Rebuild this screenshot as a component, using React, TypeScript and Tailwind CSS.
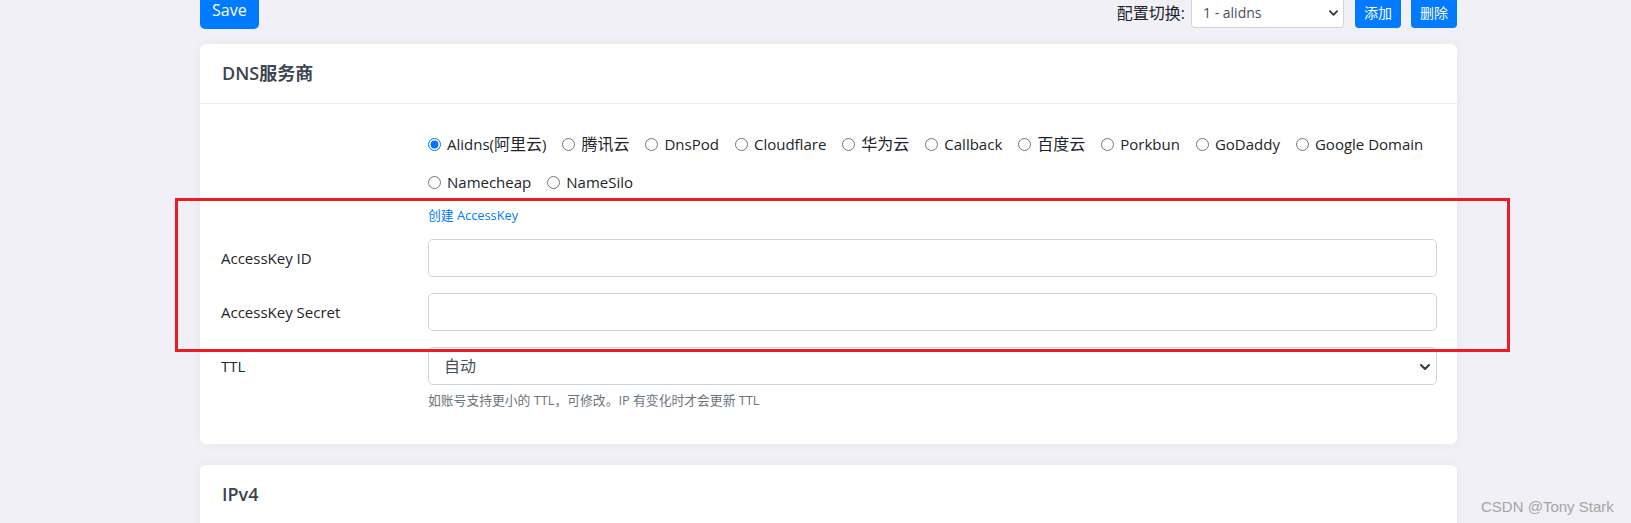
import { useState } from 'react'

const PROVIDERS: { id: string; label: React.ReactNode }[] = [
  { id: 'alidns', label: <>Alidns(<Zh>阿里云</Zh>)</> },
  { id: 'tencentcloud', label: <Zh>腾讯云</Zh> },
  { id: 'dnspod', label: 'DnsPod' },
  { id: 'cloudflare', label: 'Cloudflare' },
  { id: 'huaweicloud', label: <Zh>华为云</Zh> },
  { id: 'callback', label: 'Callback' },
  { id: 'baiducloud', label: <Zh>百度云</Zh> },
  { id: 'porkbun', label: 'Porkbun' },
  { id: 'godaddy', label: 'GoDaddy' },
  { id: 'googledomain', label: 'Google Domain' },
  { id: 'namecheap', label: 'Namecheap' },
  { id: 'namesilo', label: 'NameSilo' },
]

// Chinese glyphs sit a touch larger than the latin text around them
function Zh({ children }: { children: React.ReactNode }) {
  return <span className="text-[16px]">{children}</span>
}

function Chevron({ className }: { className?: string }) {
  return (
    <svg viewBox="0 0 10 6" className={className} fill="none">
      <path d="M1 1l4 4 4-4" stroke="#343a40" strokeWidth="2" strokeLinecap="round" strokeLinejoin="round" />
    </svg>
  )
}

function Card({ title, children }: { title: string; children?: React.ReactNode }) {
  return (
    <div className="bg-white rounded-[6px] shadow-[0_0_12px_rgba(40,40,80,0.05)]">
      <div className="h-[60px] px-[22px] flex items-center border-b border-[#e9ecef]">
        <h2 className="text-[18px] font-semibold text-[#3d4452]">{title}</h2>
      </div>
      {children}
    </div>
  )
}

export default function App() {
  const [dns, setDns] = useState('alidns')

  return (
    <div
      className="relative h-[523px] overflow-hidden bg-[#f0f0f6] text-[#212529] text-[15px]"
      style={{ fontFamily: '"Open Sans", "Noto Sans CJK SC", sans-serif' }}
    >
      <div className="ml-[200px] w-[1257px] -mt-[9px]">
        {/* Top bar */}
        <div className="flex items-end justify-between">
          <button className="h-[38px] px-[12px] bg-[#007bff] text-white text-[16px] rounded-[5px]">
            Save
          </button>
          <div className="flex items-center mb-[1px]">
            <span className="text-[16px] mr-[6px]">配置切换:</span>
            <div className="relative w-[153px] h-[31px] bg-white border border-[#ced4da] rounded-[4px] flex items-center pl-[11px] text-[14px] text-[#495057]">
              1 - alidns
              <Chevron className="absolute right-[5px] top-[12px] w-[9px] h-[6px]" />
            </div>
            <button className="ml-[11px] h-[31px] w-[46px] bg-[#007bff] text-white text-[14px] rounded-[4px]">
              添加
            </button>
            <button className="ml-[10px] h-[31px] w-[46px] bg-[#007bff] text-white text-[14px] rounded-[4px]">
              删除
            </button>
          </div>
        </div>

        {/* DNS provider */}
        <div className="mt-[15px]">
          <Card title="DNS服务商">
            <div className="px-5 pt-[21px] pb-[34px]">
              <div className="grid grid-cols-[208px_1fr]">
                <div />
                <div>
                  <div className="flex flex-wrap gap-x-[16px]">
                    {PROVIDERS.map(p => (
                      <label key={p.id} className="h-[38px] flex items-center">
                        <input
                          type="radio"
                          name="dns"
                          checked={dns === p.id}
                          onChange={() => setDns(p.id)}
                          className="m-0 w-[13px] h-[13px] mr-[6px]"
                        />
                        <span>{p.label}</span>
                      </label>
                    ))}
                  </div>
                  <a className="block mt-[5px] mb-[15px] text-[12.8px] leading-[18px] text-[#007bff]">
                    创建 AccessKey
                  </a>
                </div>
              </div>

              <div className="grid grid-cols-[208px_1fr] items-center mb-4">
                <label className="pl-[1px]">AccessKey ID</label>
                <input className="h-[38px] border border-[#ced4da] rounded-[5px] px-3 outline-none" />
              </div>
              <div className="grid grid-cols-[208px_1fr] items-center mb-4">
                <label className="pl-[1px]">AccessKey Secret</label>
                <input className="h-[38px] border border-[#ced4da] rounded-[5px] px-3 outline-none" />
              </div>
              <div className="grid grid-cols-[208px_1fr] items-start">
                <label className="pl-[1px] h-[38px] flex items-center">TTL</label>
                <div>
                  <div className="relative h-[38px] border border-[#ced4da] rounded-[5px] flex items-center pl-[15px] text-[16px] text-[#495057]">
                    自动
                    <Chevron className="absolute right-[6px] top-[16px] w-[10px] h-[6px]" />
                  </div>
                  <p className="mt-[6px] text-[12.8px] leading-[19px] text-[#6c757d]">
                    如账号支持更小的 TTL，可修改。IP 有变化时才会更新 TTL
                  </p>
                </div>
              </div>
            </div>
          </Card>
        </div>

        {/* IPv4 */}
        <div className="mt-[21px]">
          <Card title="IPv4">
            <div className="h-[200px]" />
          </Card>
        </div>
      </div>

      {/* Highlight frame around the key fields */}
      <div className="absolute left-[175px] top-[198px] w-[1335px] h-[154px] border-[3px] border-[#ec1c24] pointer-events-none" />

      <div
        className="absolute left-[1481px] top-[496px] text-[15px] text-[#a5a5a5] pointer-events-none"
        style={{ fontFamily: '"Liberation Sans", Arial, sans-serif' }}
      >
        CSDN @Tony Stark
      </div>
    </div>
  )
}
